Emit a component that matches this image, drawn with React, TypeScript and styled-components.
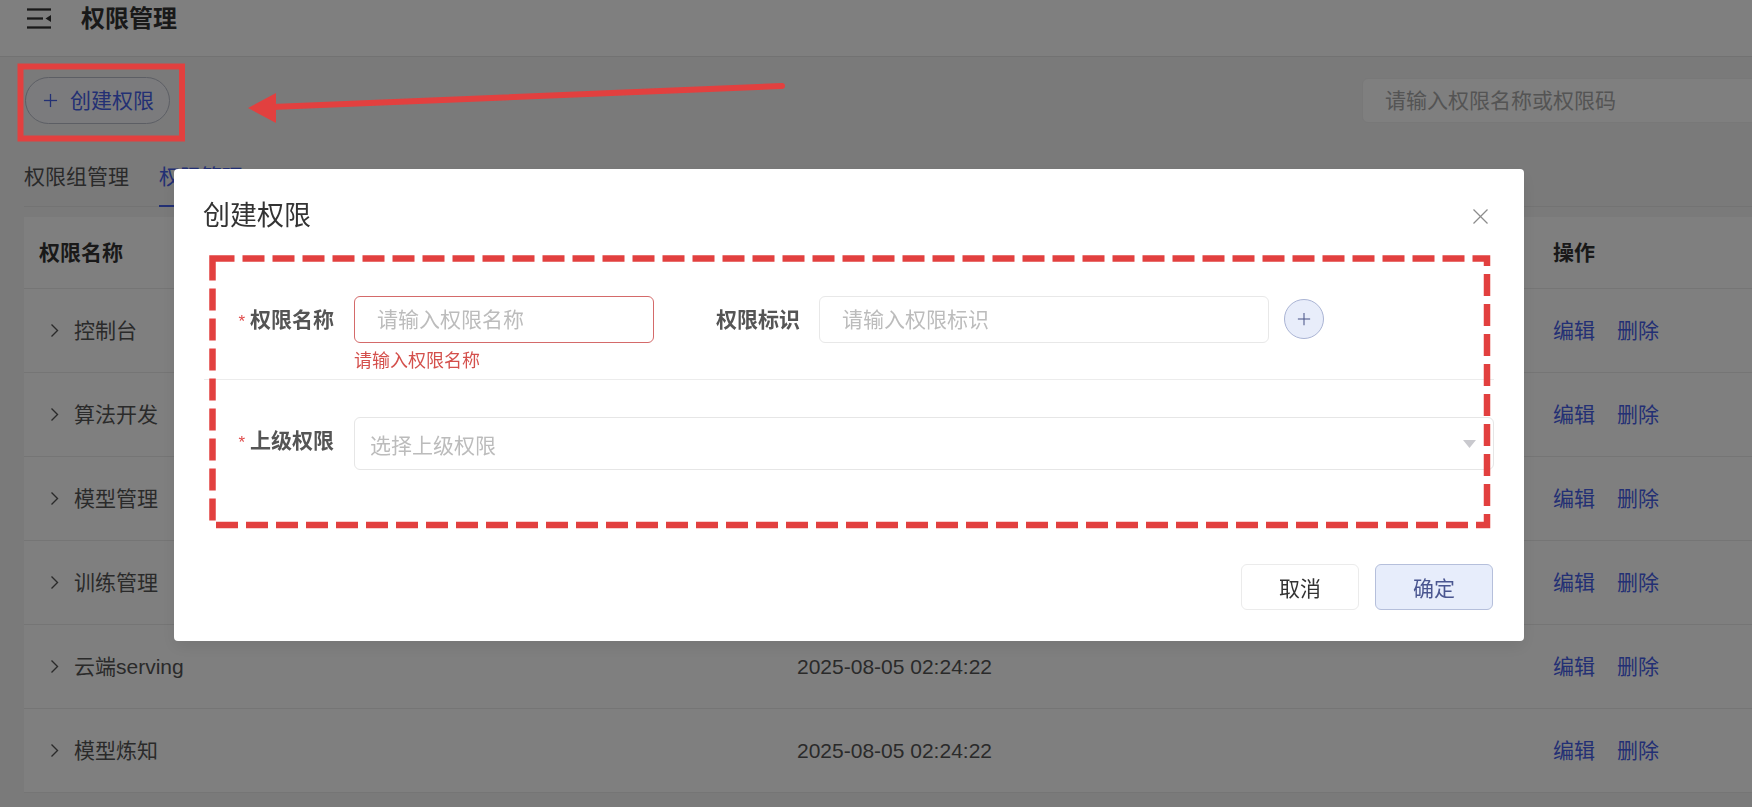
import React from 'react';
import styled, { createGlobalStyle } from 'styled-components';

const GlobalStyle = createGlobalStyle`
  * { box-sizing: border-box; }
  html, body {
    margin: 0;
    padding: 0;
    width: 1752px;
    height: 807px;
    overflow: hidden;
  }
  body {
    background: #f4f4f5;
    font-family: "Liberation Sans", "Noto Sans CJK SC", sans-serif;
    color: #555;
  }
`;

const LINK = '#4760e8';

const Page = styled.div`
  width: 1752px;
  height: 807px;
  display: flex;
  flex-direction: column;
`;

const TopBar = styled.header`
  flex: none;
  height: 57px;
  display: flex;
  align-items: center;
  gap: 30px;
  padding: 0 0 19px 27px;
  background: #fff;
  border-bottom: 1px solid #e4e4e4;
`;

const PageTitle = styled.h1`
  margin: 0;
  font-size: 24px;
  line-height: 32px;
  font-weight: 700;
  color: #333;
`;

const Main = styled.main`
  flex: 1;
  padding-left: 24px;
`;

const Toolbar = styled.div`
  margin-top: 20px;
  height: 47px;
  display: flex;
  align-items: center;
  justify-content: space-between;
`;

const CreateButton = styled.button`
  height: 47px;
  margin-left: 1px;
  padding: 0 15px 0 17px;
  display: inline-flex;
  align-items: center;
  gap: 12px;
  border: 1px solid #b9bdc9;
  border-radius: 24px;
  background: #f6f7fb;
  color: ${LINK};
  font: 21px/30px "Liberation Sans", "Noto Sans CJK SC", sans-serif;
`;

const SearchInput = styled.input`
  width: 420px;
  height: 45px;
  margin-right: -30px;
  padding: 0 22px;
  border: 1px solid #f0f0f0;
  border-radius: 6px;
  background: #fefefe;
  font: 21px "Liberation Sans", "Noto Sans CJK SC", sans-serif;
  outline: none;
  &::placeholder { color: #a9a9a9; }
`;

const TabBar = styled.div`
  margin-top: 26px;
  display: flex;
  gap: 30px;
  border-bottom: 1px solid #e6e6e6;
`;

const Tab = styled.div<{ $active?: boolean }>`
  padding: 11px 0 12px;
  margin-bottom: -1px;
  font-size: 21px;
  line-height: 32px;
  color: ${p => (p.$active ? LINK : '#555')};
  border-bottom: 2px solid ${p => (p.$active ? LINK : 'transparent')};
`;

const Table = styled.div`
  margin-top: 10px;
  background: #fff;
`;

const Row = styled.div<{ $head?: boolean }>`
  display: grid;
  grid-template-columns: 758px 756px 1fr;
  align-items: center;
  height: ${p => (p.$head ? 72 : 84)}px;
  border-bottom: 1px solid #ebebeb;
  font-size: 21px;
  line-height: 30px;
  font-weight: ${p => (p.$head ? 700 : 400)};
  color: ${p => (p.$head ? '#333' : '#555')};
`;

const Cell = styled.div`
  padding-left: 15px;
  display: flex;
  align-items: center;
`;

const Chevron = styled.svg`
  margin: 0 15px 0 11px;
`;

const Ops = styled.div`
  padding-left: 15px;
  display: flex;
  gap: 22px;
  color: ${LINK};
`;

const Overlay = styled.div`
  position: fixed;
  inset: 0;
  background: rgba(0, 0, 0, 0.5);
  padding: 169px 0 0 174px;
`;

const Modal = styled.div`
  width: 1350px;
  background: #fff;
  border-radius: 4px;
  box-shadow: 0 6px 16px rgba(0, 0, 0, 0.08);
`;

const ModalHeader = styled.div`
  height: 94px;
  display: flex;
  align-items: center;
  justify-content: space-between;
  padding: 0 36px 0 29px;
`;

const ModalTitle = styled.h2`
  margin: 0;
  font-size: 27px;
  line-height: 36px;
  font-weight: 400;
  color: #333;
`;

const Form = styled.div`
  padding: 0 30px;
`;

const FormRow = styled.div<{ $top: number }>`
  display: flex;
  align-items: flex-start;
  padding-top: ${p => p.$top}px;
`;

const Label = styled.label<{ $width: number; $lh: number }>`
  flex: none;
  width: ${p => p.$width}px;
  text-align: right;
  font-size: 21px;
  line-height: ${p => p.$lh}px;
  font-weight: 700;
  color: #555;
`;

const Star = styled.span`
  margin-right: 5px;
  font-size: 17px;
  font-weight: 400;
  color: #e04a4a;
`;

const Field = styled.div<{ $width: number; $gap: number }>`
  flex: none;
  width: ${p => p.$width}px;
  margin-left: ${p => p.$gap}px;
`;

const TextInput = styled.input<{ $error?: boolean }>`
  display: block;
  width: 100%;
  height: 47px;
  padding: 0 22px;
  border: 1px solid ${p => (p.$error ? '#d46a6a' : '#e8e8e8')};
  border-radius: 6px;
  background: #fff;
  font: 21px "Liberation Sans", "Noto Sans CJK SC", sans-serif;
  outline: none;
  &::placeholder { color: #bcbcbc; }
`;

const ErrorText = styled.div`
  margin-top: 7px;
  font-size: 18px;
  line-height: 22px;
  color: #d4504c;
`;

const RoundAdd = styled.button`
  flex: none;
  width: 40px;
  height: 40px;
  margin: 3px 0 0 15px;
  padding: 0;
  display: flex;
  align-items: center;
  justify-content: center;
  border: 1px solid #aab4d4;
  border-radius: 50%;
  background: #e8edfa;
`;

const Divider = styled.div`
  margin-top: 7px;
  height: 1px;
  background: #ececec;
`;

const Select = styled.div`
  flex: 1;
  height: 53px;
  margin-left: 20px;
  padding: 0 17px 0 15px;
  display: flex;
  align-items: center;
  justify-content: space-between;
  border: 1px solid #e6e6e6;
  border-radius: 6px;
  font-size: 21px;
  color: #bcbcbc;
`;

const Footer = styled.div`
  margin-top: 94px;
  padding: 0 31px 31px 0;
  display: flex;
  justify-content: flex-end;
  gap: 16px;
`;

const FooterButton = styled.button<{ $primary?: boolean }>`
  width: 118px;
  height: 46px;
  border-radius: 6px;
  border: 1px solid ${p => (p.$primary ? '#b5bfdb' : '#ebebeb')};
  background: ${p => (p.$primary ? '#e7edfb' : '#fff')};
  color: ${p => (p.$primary ? '#4a5690' : '#333')};
  font: 21px "Liberation Sans", "Noto Sans CJK SC", sans-serif;
`;

const Annotations = styled.svg`
  position: fixed;
  inset: 0;
  pointer-events: none;
`;

const rows = ['控制台', '算法开发', '模型管理', '训练管理', '云端serving', '模型炼知'];

const MenuIcon = () => (
  <svg width="24" height="21" viewBox="0 0 24 21">
    <g stroke="#333" strokeWidth="2.3">
      <line x1="0" y1="1.5" x2="24" y2="1.5" />
      <line x1="0" y1="10.5" x2="16" y2="10.5" />
      <line x1="0" y1="19.5" x2="24" y2="19.5" />
    </g>
    <polygon points="24,7 24,14 18.5,10.5" fill="#333" />
  </svg>
);

const PlusIcon = ({ size, color, weight = 1.4 }: { size: number; color: string; weight?: number }) => (
  <svg width={size} height={size} viewBox="0 0 16 16">
    <g stroke={color} strokeWidth={weight}>
      <line x1="8" y1="1" x2="8" y2="15" />
      <line x1="1" y1="8" x2="15" y2="8" />
    </g>
  </svg>
);

export default function App() {
  return (
    <>
      <GlobalStyle />
      <Page>
        <TopBar>
          <MenuIcon />
          <PageTitle>权限管理</PageTitle>
        </TopBar>
        <Main>
          <Toolbar>
            <CreateButton>
              <PlusIcon size={15} color={LINK} />
              创建权限
            </CreateButton>
            <SearchInput placeholder="请输入权限名称或权限码" />
          </Toolbar>
          <TabBar>
            <Tab>权限组管理</Tab>
            <Tab $active>权限管理</Tab>
          </TabBar>
          <Table>
            <Row $head>
              <Cell>权限名称</Cell>
              <Cell>创建时间</Cell>
              <Cell>操作</Cell>
            </Row>
            {rows.map(name => (
              <Row key={name}>
                <Cell>
                  <Chevron width="9" height="15" viewBox="0 0 9 15">
                    <polyline points="1.5,1.5 7.5,7.5 1.5,13.5" fill="none" stroke="#555" strokeWidth="1.4" />
                  </Chevron>
                  {name}
                </Cell>
                <Cell>2025-08-05 02:24:22</Cell>
                <Ops>
                  <span>编辑</span>
                  <span>删除</span>
                </Ops>
              </Row>
            ))}
          </Table>
        </Main>
      </Page>

      <Overlay>
        <Modal>
          <ModalHeader>
            <ModalTitle>创建权限</ModalTitle>
            <svg width="15" height="15" viewBox="0 0 15 15">
              <g stroke="#8c8c8c" strokeWidth="1.3">
                <line x1="0.5" y1="0.5" x2="14.5" y2="14.5" />
                <line x1="14.5" y1="0.5" x2="0.5" y2="14.5" />
              </g>
            </svg>
          </ModalHeader>
          <Form>
            <FormRow $top={33}>
              <Label $width={130} $lh={47}>
                <Star>*</Star>权限名称
              </Label>
              <Field $width={300} $gap={20}>
                <TextInput $error placeholder="请输入权限名称" />
                <ErrorText>请输入权限名称</ErrorText>
              </Field>
              <Label $width={146} $lh={47}>权限标识</Label>
              <Field $width={450} $gap={19}>
                <TextInput placeholder="请输入权限标识" />
              </Field>
              <RoundAdd>
                <PlusIcon size={14} color="#4b5688" weight={1.2} />
              </RoundAdd>
            </FormRow>
            <Divider />
            <FormRow $top={37}>
              <Label $width={130} $lh={48}>
                <Star>*</Star>上级权限
              </Label>
              <Select>
                <span>选择上级权限</span>
                <svg width="13" height="8" viewBox="0 0 13 8">
                  <polygon points="0,0 13,0 6.5,8" fill="#c9c9ce" />
                </svg>
              </Select>
            </FormRow>
          </Form>
          <Footer>
            <FooterButton>取消</FooterButton>
            <FooterButton $primary>确定</FooterButton>
          </Footer>
        </Modal>
      </Overlay>

      <Annotations width="1752" height="807" viewBox="0 0 1752 807">
        <rect x="20.5" y="66.5" width="161.5" height="72" fill="none" stroke="#e2403f" strokeWidth="6" />
        <line x1="272" y1="107" x2="782" y2="86" stroke="#e2403f" strokeWidth="6" strokeLinecap="round" />
        <polygon points="248,108 276,93 276,123" fill="#e2403f" />
        <rect
          x="212.5"
          y="258.5"
          width="1274.5"
          height="266.5"
          fill="none"
          stroke="#e2403f"
          strokeWidth="6.5"
          strokeDasharray="22 8"
        />
      </Annotations>
    </>
  );
}
